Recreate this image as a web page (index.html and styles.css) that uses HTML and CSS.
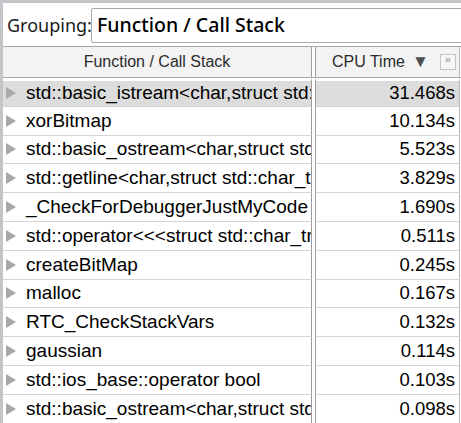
FILE: index.html
```html
<!DOCTYPE html>
<html>
<head>
<meta charset="utf-8">
<link rel="stylesheet" href="styles.css">
</head>
<body>
<div class="frame">
  <div class="grouping">
    <span class="glabel">Grouping:</span>
    <div class="gbox">Function / Call Stack</div>
  </div>
  <div class="table">
    <div class="hrow">
      <div class="hname">Function / Call Stack</div>
      <div class="htime"><span>CPU Time</span><span class="sort">▼</span><span class="more">»</span></div>
    </div>
    <div class="row sel"><div class="name"><i class="tri"></i>std::basic_istream&lt;char,struct std::char_traits&lt;char&gt; &gt;</div><div class="time">31.468s</div></div>
    <div class="row"><div class="name"><i class="tri"></i>xorBitmap</div><div class="time">10.134s</div></div>
    <div class="row"><div class="name"><i class="tri"></i>std::basic_ostream&lt;char,struct std::char_traits&lt;char&gt; &gt;</div><div class="time">5.523s</div></div>
    <div class="row"><div class="name"><i class="tri"></i>std::getline&lt;char,struct std::char_traits&lt;char&gt;</div><div class="time">3.829s</div></div>
    <div class="row"><div class="name"><i class="tri"></i>_CheckForDebuggerJustMyCode</div><div class="time">1.690s</div></div>
    <div class="row"><div class="name"><i class="tri"></i>std::operator&lt;&lt;&lt;struct std::char_traits&lt;char&gt; &gt;</div><div class="time">0.511s</div></div>
    <div class="row"><div class="name"><i class="tri"></i>createBitMap</div><div class="time">0.245s</div></div>
    <div class="row"><div class="name"><i class="tri"></i>malloc</div><div class="time">0.167s</div></div>
    <div class="row"><div class="name"><i class="tri"></i>RTC_CheckStackVars</div><div class="time">0.132s</div></div>
    <div class="row"><div class="name"><i class="tri"></i>gaussian</div><div class="time">0.114s</div></div>
    <div class="row"><div class="name"><i class="tri"></i>std::ios_base::operator bool</div><div class="time">0.103s</div></div>
    <div class="row"><div class="name"><i class="tri"></i>std::basic_ostream&lt;char,struct std::char_traits&lt;char&gt; &gt;</div><div class="time">0.098s</div></div>
  </div>
</div>
</body>
</html>
```

FILE: styles.css
```css
html, body {
  margin: 0;
  padding: 0;
  background: #fff;
  overflow: hidden;
}
.frame {
  width: 461px;
  height: 423px;
  box-sizing: border-box;
  border-top: 3px solid #c2c6cb;
  border-left: 3px solid #c2c6cb;
  overflow: hidden;
  font-family: "Liberation Sans", Arial, sans-serif;
}
.grouping {
  height: 43px;
  box-sizing: border-box;
  display: flex;
  align-items: flex-start;
  padding-top: 5px;
  padding-left: 4px;
}
.glabel {
  font-family: "Noto Sans", "Open Sans", sans-serif;
  font-size: 18px;
  color: #1a1a1a;
  line-height: 34px;
  width: 84px;
  flex: none;
}
.gbox {
  flex: none;
  width: 400px;
  height: 35px;
  box-sizing: border-box;
  border: 1px solid #a9a9a9;
  border-radius: 2px;
  font-family: "Noto Sans", "Open Sans", sans-serif;
  font-size: 19.5px;
  font-weight: 500;
  color: #000;
  line-height: 32px;
  padding-left: 5px;
}
.table {
  display: flex;
  flex-direction: column;
}
.hrow {
  display: flex;
  height: 32px;
  box-sizing: border-box;
  border-top: 1px solid #a8a8a8;
  border-bottom: 1px solid #a8a8a8;
  font-size: 16px;
  color: #2b2b2b;
}
.hname {
  width: 309px;
  flex: none;
  box-sizing: border-box;
  border-right: 1px solid #9c9c9c;
  background: #f3f3f3;
  text-align: center;
  line-height: 30px;
}
.htime {
  flex: 1;
  margin-left: 3px;
  border-left: 1px solid #9c9c9c;
  border-right: 1px solid #b8b8b8;
  background: #f3f3f3;
  display: flex;
  align-items: center;
  padding-left: 16px;
  margin-right: 1px;
}
.sort {
  font-size: 17px;
  color: #505050;
  margin-left: 7px;
}
.more {
  margin-left: 11px;
  width: 14px;
  height: 14px;
  border: 1px solid #c4c4c4;
  background: #f7f7f7;
  font-size: 11px;
  color: #888;
  line-height: 9px;
  text-align: center;
  align-self: flex-start;
  margin-top: 7px;
}
.row {
  display: flex;
  height: 28.8px;
  flex: none;
  font-size: 19px;
  color: #000;
}
.name {
  width: 309px;
  flex: none;
  box-sizing: border-box;
  border-right: 1px solid #9c9c9c;
  border-bottom: 1px solid #d4d4d4;
  white-space: nowrap;
  overflow: hidden;
  display: flex;
  align-items: center;
  padding-left: 3px;
}
.time {
  flex: 1;
  margin-left: 3px;
  margin-right: 1px;
  box-sizing: border-box;
  border-left: 1px solid #9c9c9c;
  border-right: 1px solid #b8b8b8;
  border-bottom: 1px solid #d4d4d4;
  font-size: 18.5px;
  padding-right: 4px;
  display: flex;
  align-items: center;
  justify-content: flex-end;
}
.sel .name, .sel .time {
  background: #dcdcdc;
  border-top: 3px solid #fff;
}
.tri {
  display: inline-block;
  width: 0;
  height: 0;
  border-left: 10px solid #a8a8a8;
  border-top: 6px solid transparent;
  border-bottom: 6px solid transparent;
  margin-right: 10px;
  flex: none;
}
```
